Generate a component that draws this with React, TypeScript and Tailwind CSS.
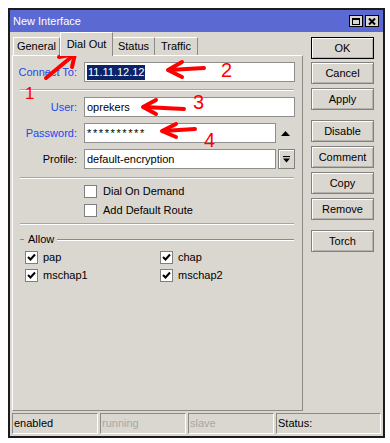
import React from "react";

const bg = "bg-[#dad7d0]";

const Btn = ({ label, def, className = "" }: { label: string; def?: boolean; className?: string }) => (
  <div
    className={`h-[22px] w-[63px] flex items-center justify-center border ${
      def ? "border-black" : "border-[#808080]"
    } shadow-[inset_1px_1px_0_#ffffff,inset_-1px_-1px_0_#b4b2ac] ${className}`}
  >
    {label}
  </div>
);

const Separator = ({ className = "" }: { className?: string }) => (
  <div className={`ml-[7px] w-[274px] border-t border-t-[#a8a6a0] border-b border-b-white ${className}`} />
);

const CheckBox = ({ checked }: { checked?: boolean }) => (
  <div className="w-[13px] h-[13px] bg-white border border-[#7f7f7f] flex items-center justify-center shrink-0">
    {checked && (
      <svg width="9" height="9" viewBox="0 0 9 9">
        <path d="M1 4 L3.5 6.5 L8 1.5" stroke="#000" strokeWidth="2" fill="none" />
      </svg>
    )}
  </div>
);

const Field = ({
  label,
  blue,
  children,
  className = "",
  width = "w-[211px]",
}: {
  label: string;
  blue?: boolean;
  children?: React.ReactNode;
  className?: string;
  width?: string;
}) => (
  <div className={`flex items-center h-[20px] ${className}`}>
    <div className={`w-[64px] text-right ${blue ? "text-[#2246f0]" : "text-black"}`}>{label}</div>
    <div className={`ml-[7px] h-[20px] ${width} bg-white border border-[#8e8e8e] flex items-center pl-[2px]`}>
      {children}
    </div>
  </div>
);

export default function App() {
  return (
    <div className="relative w-[390px] h-[443px] bg-white pt-[8px] pl-[8px] font-['Liberation_Sans',Arial,sans-serif] text-[11px] text-black">
      {/* Window */}
      <div className={`w-[377px] h-[430px] border-2 border-[#1c1c1c] ${bg} flex flex-col`}>
        {/* Title bar */}
        <div className="h-[22px] bg-[#5b69d2] flex items-center pl-[3px] pr-[4px]">
          <span className="text-white text-[11px]">New Interface</span>
          <div className="ml-auto flex gap-[2px]">
            <div className={`w-[14px] h-[12px] ${bg} border border-black flex items-center justify-center`}>
              <div className="w-[8px] h-[7px] border border-black border-t-2" />
            </div>
            <div className={`w-[14px] h-[12px] ${bg} border border-black flex items-center justify-center`}>
              <svg width="8" height="7" viewBox="0 0 8 7">
                <path d="M1 0.5 L7 6.5 M7 0.5 L1 6.5" stroke="#000" strokeWidth="2" />
              </svg>
            </div>
          </div>
        </div>

        {/* Body */}
        <div className="flex h-[379px]">
          {/* Left: tabs + panel */}
          <div className="pl-[2px] w-[293px] flex flex-col">
            <div className="h-[23px] flex items-end pl-[1px]">
              <div className="w-[47px] h-[18px] border-t border-l border-t-white border-l-white border-r border-r-[#8c8a85] flex items-center justify-center">
                General
              </div>
              <div className={`relative z-10 w-[53px] h-[24px] -mb-[1px] ${bg} border-t border-l border-t-white border-l-white border-r border-r-[#8c8a85] flex items-start pt-[3px] justify-center`}>
                Dial Out
              </div>
              <div className="w-[42px] h-[18px] border-t border-t-white border-r border-r-[#8c8a85] flex items-center justify-center">
                Status
              </div>
              <div className="w-[43px] h-[18px] border-t border-t-white border-r border-r-[#8c8a85] flex items-center justify-center">
                Traffic
              </div>
            </div>

            <div className="h-[356px] w-[291px] border-t border-l border-t-white border-l-white border-r border-b border-r-[#8c8a85] border-b-[#8c8a85] flex flex-col">
              <Field label="Connect To:" blue className="mt-[6px]">
                <span className="bg-[#0a246a] text-white px-[1px] leading-[15px]">11.11.12.12</span>
              </Field>
              <Separator className="mt-[7px]" />
              <Field label="User:" blue className="mt-[6px]">
                oprekers
              </Field>
              <div className="flex items-center mt-[6px]">
                <Field label="Password:" blue width="w-[192px]">
                  <span className="tracking-[1.6px]">**********</span>
                </Field>
                <div className="w-[19px] flex justify-center">
                  <svg width="9" height="5" viewBox="0 0 9 5">
                    <path d="M0 5 L4.5 0 L9 5 Z" fill="#000" />
                  </svg>
                </div>
              </div>
              <div className="flex items-center mt-[6px]">
                <Field label="Profile:" width="w-[192px]">
                  default-encryption
                </Field>
                <div className="ml-[2px] w-[17px] h-[20px] border border-[#808080] shadow-[inset_1px_1px_0_#ffffff] flex items-center justify-center">
                  <svg width="7" height="7" viewBox="0 0 7 7">
                    <path d="M0 0.5 H7" stroke="#000" strokeWidth="1.2" />
                    <path d="M0 2.5 L7 2.5 L3.5 6.5 Z" fill="#000" />
                  </svg>
                </div>
              </div>
              <Separator className="mt-[8px]" />
              <div className="flex items-center ml-[71px] mt-[5px] h-[14px] gap-[6px]">
                <CheckBox />
                <span>Dial On Demand</span>
              </div>
              <div className="flex items-center ml-[71px] mt-[5px] h-[14px] gap-[6px]">
                <CheckBox />
                <span>Add Default Route</span>
              </div>
              <Separator className="mt-[6px]" />

              <div className="ml-[7px] w-[274px] mt-[8px] h-[13px] flex items-center">
                <div className="w-[4px] border-t border-[#8c8a85]" />
                <span className="ml-[4px]">Allow</span>
                <div className="ml-[3px] flex-1 border-t border-t-[#8c8a85] border-b border-b-white" />
              </div>
              <div className="ml-[12px] mt-[5px] grid grid-cols-[135px_120px] gap-y-[5px]">
                {["pap", "chap", "mschap1", "mschap2"].map((n) => (
                  <div key={n} className="flex items-center h-[13px] gap-[5px]">
                    <CheckBox checked />
                    <span>{n}</span>
                  </div>
                ))}
              </div>
            </div>
          </div>

          {/* Right buttons */}
          <div className="ml-[8px] pt-[5px] flex flex-col">
            <Btn label="OK" def />
            <Btn label="Cancel" className="mt-[3px]" />
            <Btn label="Apply" className="mt-[4px]" />
            <Btn label="Disable" className="mt-[10px]" />
            <Btn label="Comment" className="mt-[4px]" />
            <Btn label="Copy" className="mt-[4px]" />
            <Btn label="Remove" className="mt-[4px]" />
            <Btn label="Torch" className="mt-[10px]" />
          </div>
        </div>

        {/* Status bar */}
        <div className="mt-[2px] pl-[2px] flex gap-[2px] h-[21px]">
          {[
            { t: "enabled", w: "w-[86px]", c: "text-black" },
            { t: "running", w: "w-[86px]", c: "text-[#a9a7a2]" },
            { t: "slave", w: "w-[86px]", c: "text-[#a9a7a2]" },
            { t: "Status:", w: "w-[105px]", c: "text-black" },
          ].map((s) => (
            <div
              key={s.t}
              className={`${s.w} ${s.c} h-[21px] border-t border-l border-t-[#8c8a85] border-l-[#8c8a85] border-b border-r border-b-white border-r-white flex items-center pl-[1px]`}
            >
              {s.t}
            </div>
          ))}
        </div>
      </div>

      {/* Red annotations */}
      <svg className="absolute inset-0 pointer-events-none" width="390" height="443" viewBox="0 0 390 443">
        <g stroke="#ff0000" strokeWidth="4" strokeLinecap="round" strokeLinejoin="round" fill="none">
          <path d="M46 78 L75 54" />
          <path d="M59 57 L75 54 L72 67" />
          <path d="M169 70 L204 68" />
          <path d="M182 62 L168 70 L182 77" />
          <path d="M144 107 L184 109" />
          <path d="M156 100 L143 107 L156 114" />
          <path d="M163 131 L195 129" />
          <path d="M176 124 L162 131 L176 137" />
        </g>
      </svg>
      <span className="absolute left-[25px] top-[85px] text-[17px] leading-[17px] text-[#ff0000]">1</span>
      <span className="absolute left-[221px] top-[60px] text-[20px] leading-[20px] text-[#ff0000]">2</span>
      <span className="absolute left-[193px] top-[92px] text-[20px] leading-[20px] text-[#ff0000]">3</span>
      <span className="absolute left-[204px] top-[130px] text-[20px] leading-[20px] text-[#ff0000]">4</span>
    </div>
  );
}
